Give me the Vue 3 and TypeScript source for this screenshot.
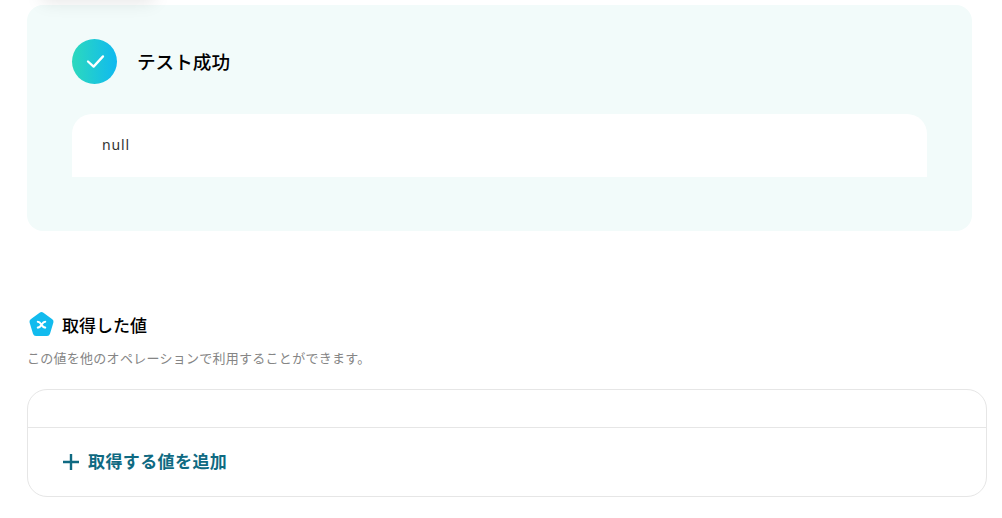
<script setup lang="ts">
const title = 'テスト成功'
</script>

<template>
  <div class="page">
    <div class="ghost"></div>
    <section class="result">
      <div class="head">
        <span class="badge">
          <svg width="20" height="20" viewBox="0 0 20 20" fill="none">
            <path d="M3 9.5 8.6 14.6 18 4.4" stroke="#fff" stroke-width="2.3" stroke-linecap="round" stroke-linejoin="round" />
          </svg>
        </span>
        <h2>{{ title }}</h2>
      </div>
      <div class="output">null</div>
    </section>

    <section class="values">
      <div class="label">
        <svg width="28" height="28" viewBox="0 0 28 28">
          <path d="M11.6 2.7a3.4 3.4 0 0 1 3.8 0l8.9 6.5a3 3 0 0 1 1.1 3.3L22 23.7a3.2 3.2 0 0 1-3 2.3H8a3.2 3.2 0 0 1-3-2.3L1.6 12.5a3 3 0 0 1 1.1-3.3Z" fill="#12bbee" />
          <path d="M9.8 11.8c1.8 0 2.5 1.2 3.7 3 1.2 1.8 1.9 2.8 3.7 2.8M17.2 11.8c-1.8 0-2.5 1.2-3.7 3-1.2 1.8-1.9 2.8-3.7 2.8" stroke="#fff" stroke-width="2.1" fill="none" stroke-linecap="round" />
        </svg>
        <h3>取得した値</h3>
      </div>
      <p class="hint">この値を他のオペレーションで利用することができます。</p>
      <div class="box">
        <div class="empty"></div>
        <button class="add" type="button">
          <svg width="16" height="16" viewBox="0 0 16 16">
            <path d="M8 0V16M0 8H16" stroke="#0f6a82" stroke-width="2.4" />
          </svg>
          <span>取得する値を追加</span>
        </button>
      </div>
    </section>
  </div>
</template>

<style scoped>
.page {
  position: relative;
  width: 1002px;
  height: 518px;
  overflow: hidden;
  padding: 5px 15px 0 27px;
  box-sizing: border-box;
  background: #fff;
  font-family: "Noto Sans CJK JP", "Noto Sans", sans-serif;
}
.ghost {
  position: absolute;
  left: 42px;
  top: -30px;
  width: 112px;
  height: 30px;
  box-shadow: 0 2px 18px rgba(0, 0, 0, 0.1);
}
.result {
  width: 945px;
  height: 226px;
  box-sizing: border-box;
  padding: 34px 45px 0;
  background: #f2fbfa;
  border-radius: 16px;
}
.head {
  display: flex;
  align-items: center;
  gap: 20px;
  height: 45px;
}
.badge {
  width: 45px;
  height: 45px;
  border-radius: 50%;
  display: flex;
  align-items: center;
  justify-content: center;
  background: linear-gradient(90deg, #2cd9bd, #10b9f0);
}
.head h2 {
  margin: 0 0 2px;
  font-size: 18.6px;
  font-weight: 500;
  color: #000;
  line-height: 43px;
}
.output {
  margin-top: 30px;
  height: 63px;
  box-sizing: border-box;
  padding: 19px 30px 0;
  background: #fff;
  border-radius: 20px 20px 0 0;
  font-family: "Noto Sans", sans-serif;
  font-size: 14px;
  line-height: 24px;
  letter-spacing: 0.9px;
  color: #333;
}
.values {
  margin-top: 79px;
}
.label {
  display: flex;
  align-items: center;
  gap: 6px;
  height: 28px;
  margin-left: 1px;
}
.label h3 {
  margin: 0;
  font-size: 17px;
  font-weight: 500;
  color: #000;
}
.hint {
  margin: 10px 0 0;
  font-size: 13px;
  line-height: 20px;
  letter-spacing: 0.27px;
  color: #858585;
}
.box {
  margin-top: 21px;
  width: 960px;
  height: 108px;
  box-sizing: border-box;
  border: 1px solid #e6e6e6;
  border-radius: 20px;
}
.empty {
  height: 37px;
  border-bottom: 1px solid #e6e6e6;
}
.add {
  display: flex;
  align-items: center;
  gap: 9px;
  height: 68px;
  padding: 0 0 0 35px;
  border: 0;
  background: none;
  font: inherit;
  font-size: 17px;
  font-weight: 700;
  letter-spacing: 0.4px;
  color: #0f6a82;
}
.add span {
  margin-bottom: 3px;
}
</style>
